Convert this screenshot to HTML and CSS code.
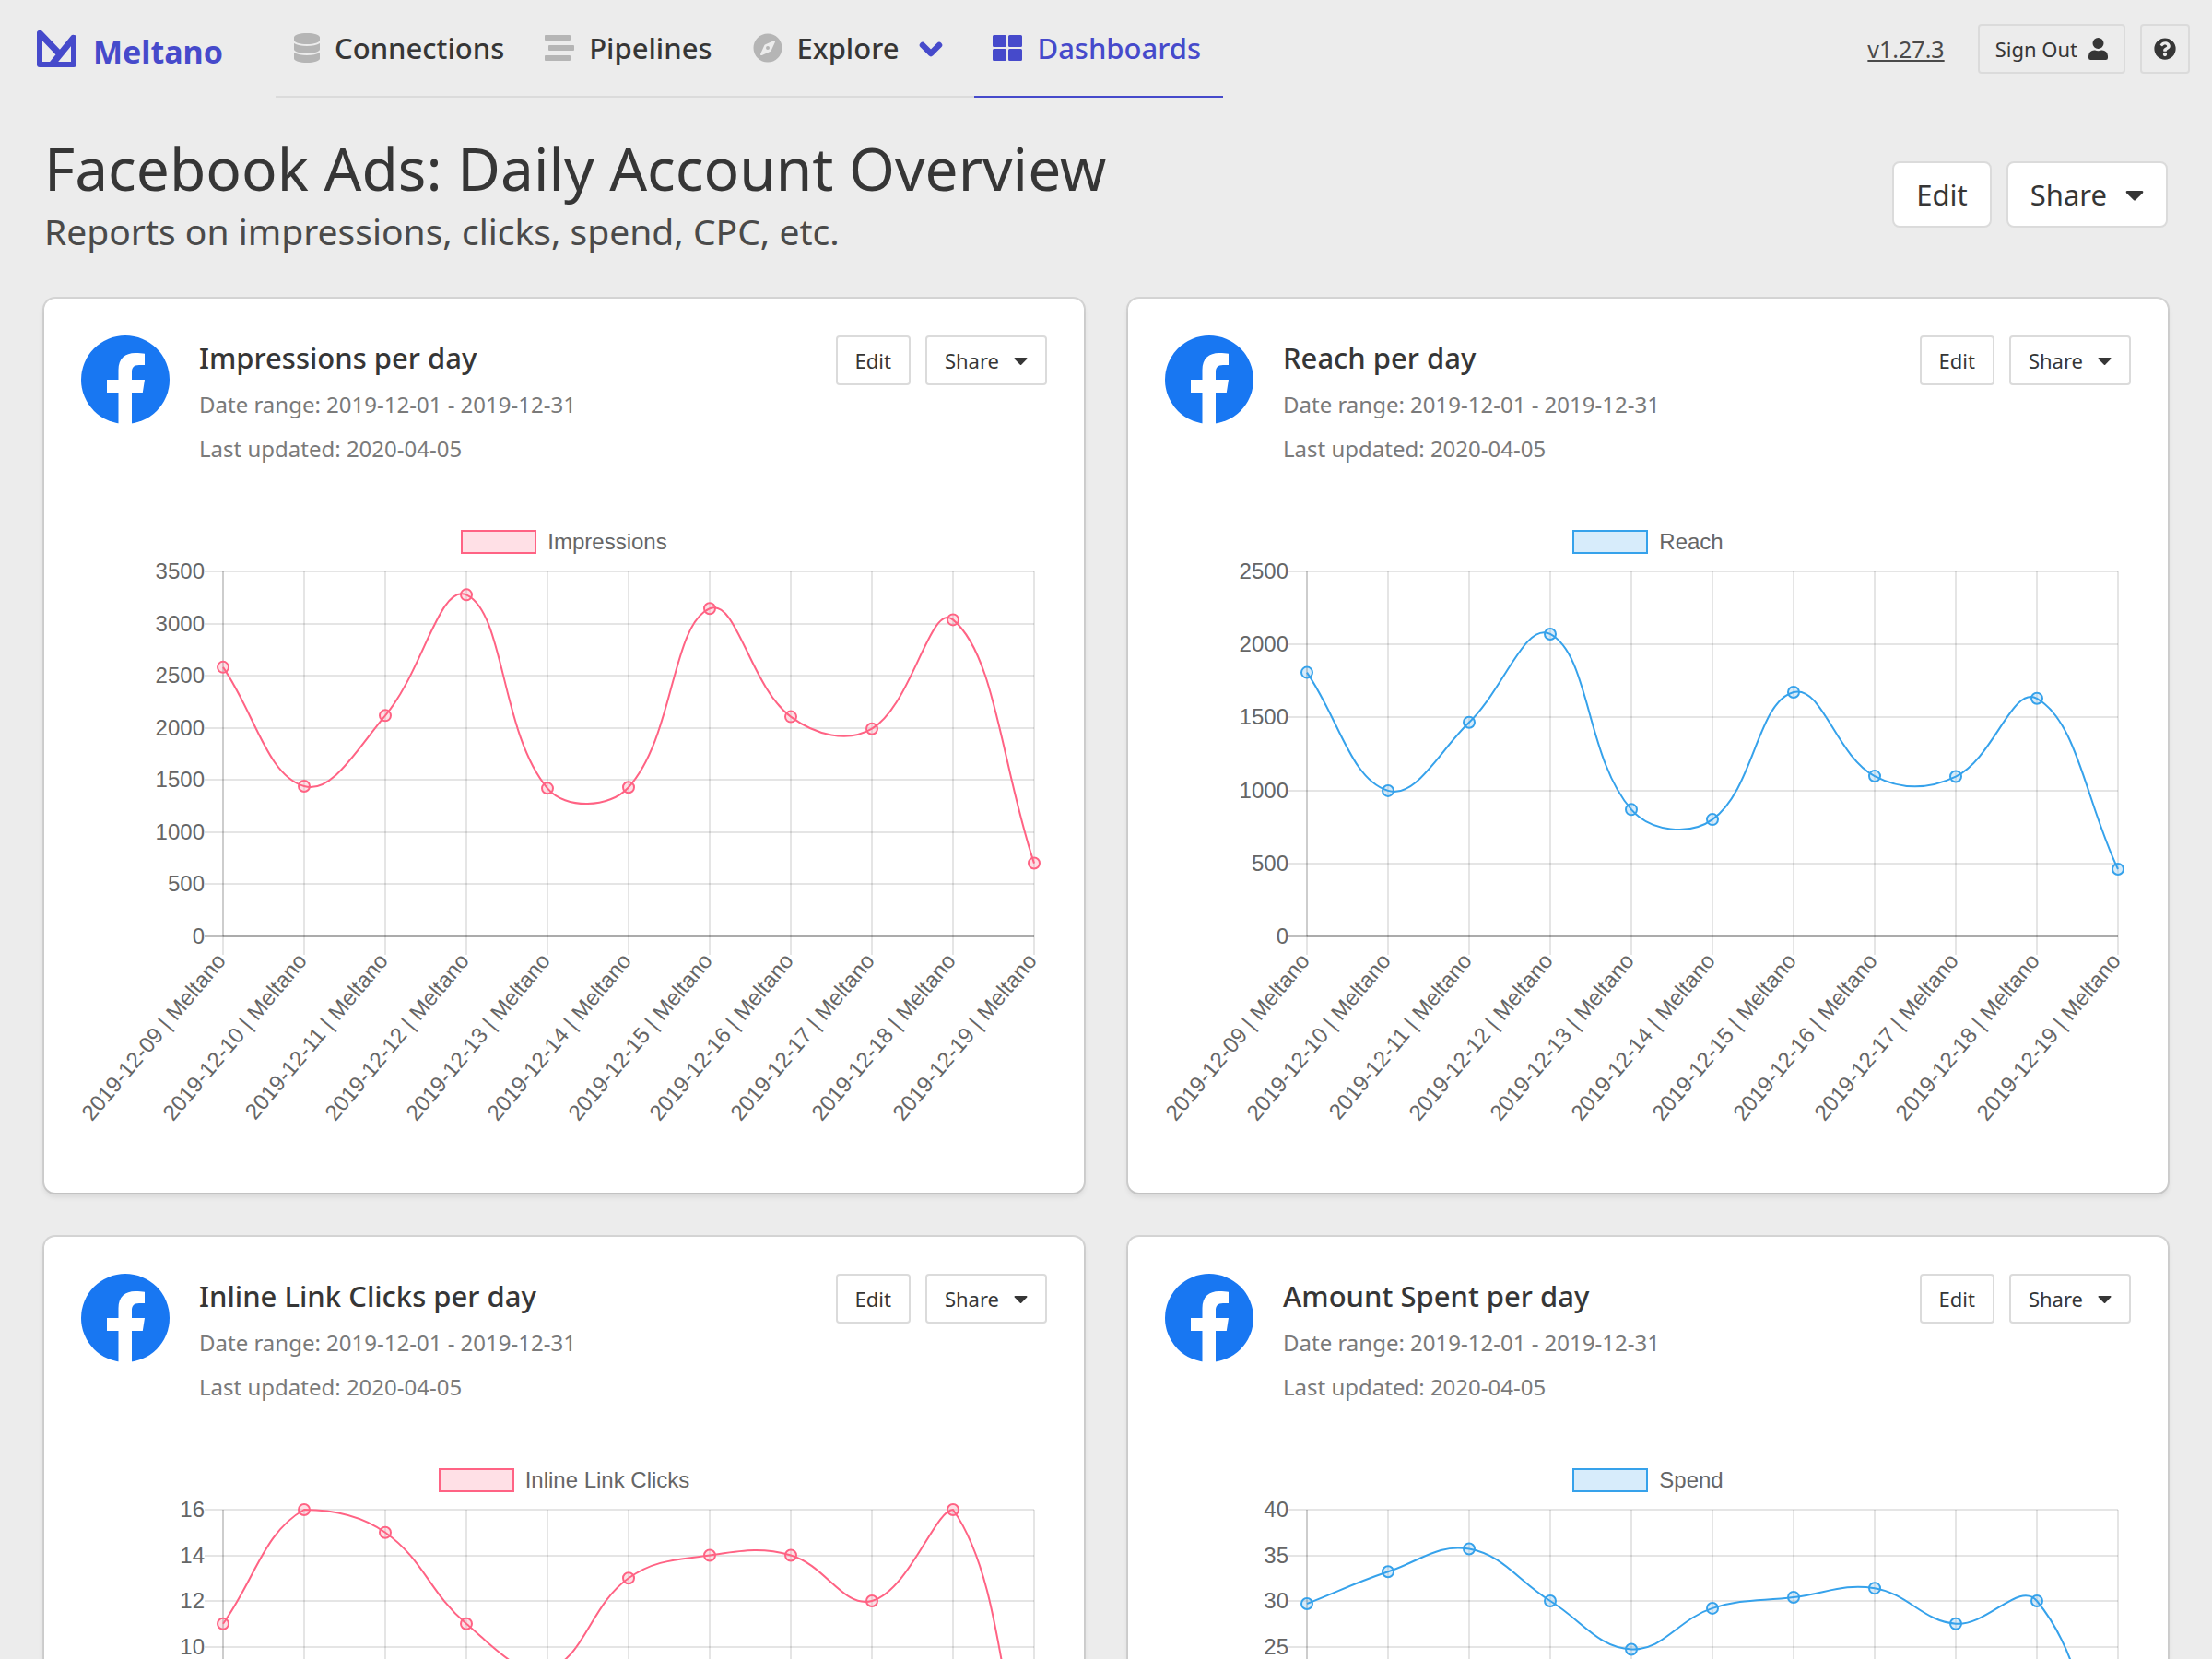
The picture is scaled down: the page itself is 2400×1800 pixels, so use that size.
FILE: index.html
```html
<!DOCTYPE html>
<html lang="en">
<head>
<meta charset="utf-8">
<meta name="viewport" content="width=device-width, initial-scale=1">
<title>Meltano</title>
<link rel="stylesheet" href="styles.css">
</head>
<body>

<svg class="sprite" aria-hidden="true">
  <symbol id="i-database" viewBox="0 0 448 512"><path d="M448 73v46c0 40-100 73-224 73S0 159 0 119V73C0 33 100 0 224 0s224 33 224 73zm0 103v103c0 40-100 73-224 73S0 319 0 279V176c48 33 136 49 224 49s176-16 224-49zm0 160v103c0 40-100 73-224 73S0 479 0 439V336c48 33 136 49 224 49s176-16 224-49z"/></symbol>
  <symbol id="i-stream" viewBox="0 0 512 512"><path d="M16 128h416a16 16 0 0 0 16-16V48a16 16 0 0 0-16-16H16A16 16 0 0 0 0 48v64a16 16 0 0 0 16 16zm480 80H80a16 16 0 0 0-16 16v64a16 16 0 0 0 16 16h416a16 16 0 0 0 16-16v-64a16 16 0 0 0-16-16zm-64 176H16a16 16 0 0 0-16 16v64a16 16 0 0 0 16 16h416a16 16 0 0 0 16-16v-64a16 16 0 0 0-16-16z"/></symbol>
  <symbol id="i-compass" viewBox="0 0 512 512"><path fill-rule="evenodd" d="M256 8a248 248 0 1 0 0 496 248 248 0 0 0 0-496zm126 148-69 150a16 16 0 0 1-8 8l-150 69c-16 7-33-9-25-25l69-150a16 16 0 0 1 8-8l150-69c16-7 32 9 25 25zm-126 68a32 32 0 1 0 0 64 32 32 0 0 0 0-64z"/></symbol>
  <symbol id="i-chevron" viewBox="0 0 26 17"><path d="M4 4l9 9 9-9" fill="none" stroke="currentColor" stroke-width="6.500" stroke-linecap="round" stroke-linejoin="round"/></symbol>
  <symbol id="i-grid" viewBox="0 0 512 512"><path d="M24 32h192a24 24 0 0 1 24 24v160a24 24 0 0 1-24 24H24a24 24 0 0 1-24-24V56a24 24 0 0 1 24-24zm272 0h192a24 24 0 0 1 24 24v160a24 24 0 0 1-24 24H296a24 24 0 0 1-24-24V56a24 24 0 0 1 24-24zM24 272h192a24 24 0 0 1 24 24v160a24 24 0 0 1-24 24H24a24 24 0 0 1-24-24V296a24 24 0 0 1 24-24zm272 0h192a24 24 0 0 1 24 24v160a24 24 0 0 1-24 24H296a24 24 0 0 1-24-24V296a24 24 0 0 1 24-24z"/></symbol>
  <symbol id="i-user" viewBox="0 0 448 512"><path d="M224 256a128 128 0 1 0 0-256 128 128 0 0 0 0 256zm90 32h-17a174 174 0 0 1-146 0h-17A134 134 0 0 0 0 422v42a48 48 0 0 0 48 48h352a48 48 0 0 0 48-48v-42a134 134 0 0 0-134-134z"/></symbol>
  <symbol id="i-help" viewBox="0 0 512 512"><path fill-rule="evenodd" d="M504 256a248 248 0 1 1-496 0 248 248 0 0 1 496 0zM262.700 90c-54.500 0-89.300 23-116.500 63.800a12 12 0 0 0 2.700 16l34.700 26.400a12 12 0 0 0 16.600-2.100c17.900-22.700 30.100-35.800 57.300-35.800 20.400 0 45.700 13.100 45.700 33 0 15-12.400 22.700-32.500 34C247.100 238.500 216 254.900 216 296v4a12 12 0 0 0 12 12h56a12 12 0 0 0 12-12v-1.300c0-28.500 83.200-29.600 83.200-106.700 0-58-60.200-102-116.500-102zM256 338a46 46 0 1 0 0 92 46 46 0 0 0 0-92z"/></symbol>
  <symbol id="i-caret" viewBox="0 0 320 512"><path d="M31 192h258c18 0 27 21 14 34L174 355a20 20 0 0 1-28 0L17 226c-13-13-4-34 14-34z"/></symbol>
  <symbol id="i-facebook" viewBox="0 0 96 96"><circle cx="48" cy="48" r="48" fill="#1877f2"/><path fill="#fff" d="M40.500 96V62H28V48h12.500V37.200C40.500 25 47.800 19 58.700 19c4 0 8 .4 10.300.8V32h-6c-6.300 0-8 3.500-8 8v8h14l-2.200 14H55v34z"/></symbol>
</svg>

<header class="navbar">
  <a class="brand" href="#">
    <svg class="brand-mark" viewBox="0 0 43 40" aria-hidden="true"><path d="M3 3v34h37V8"/><path class="fold" d="M3.500 3.500L25 26M39.500 8.500L17 36"/></svg>
    <span class="brand-name">Meltano</span>
  </a>
  <nav class="tabs">
    <a class="tab" href="#"><svg class="icon icon-narrow"><use href="#i-database"/></svg>Connections</a>
    <a class="tab" href="#"><svg class="icon"><use href="#i-stream"/></svg>Pipelines</a>
    <a class="tab" href="#"><svg class="icon"><use href="#i-compass"/></svg>Explore<svg class="chevron"><use href="#i-chevron"/></svg></a>
    <a class="tab is-active" href="#"><svg class="icon"><use href="#i-grid"/></svg>Dashboards</a>
  </nav>
  <div class="account">
    <a class="version" href="#">v1.27.3</a>
    <button class="button is-plain" type="button">Sign Out<svg class="glyph glyph-user" aria-hidden="true"><use href="#i-user"/></svg></button>
    <button class="button is-plain is-square" type="button" aria-label="Help"><svg class="glyph" aria-hidden="true"><use href="#i-help"/></svg></button>
  </div>
</header>

<main class="page">
  <div class="page-head">
    <div>
      <h1 class="title">Facebook Ads: Daily Account Overview</h1>
      <p class="subtitle">Reports on impressions, clicks, spend, CPC, etc.</p>
    </div>
    <div class="buttons">
      <button class="button is-large" type="button">Edit</button>
      <button class="button is-large" type="button">Share<svg class="caret" aria-hidden="true"><use href="#i-caret"/></svg></button>
    </div>
  </div>
  <div class="reports" id="reports"></div>
</main>

<template id="report-template">
  <article class="card">
    <header class="card-head">
      <svg class="avatar" role="img" aria-label="Facebook"><use href="#i-facebook"/></svg>
      <div class="card-text">
        <h2 class="card-title"></h2>
        <p class="meta">Date range: 2019-12-01 - 2019-12-31</p>
        <p class="meta">Last updated: 2020-04-05</p>
      </div>
      <div class="buttons">
        <button class="button" type="button">Edit</button>
        <button class="button" type="button">Share<svg class="caret" aria-hidden="true"><use href="#i-caret"/></svg></button>
      </div>
    </header>
    <figure class="chart">
      <figcaption class="legend"><span class="swatch"></span><span class="legend-label"></span></figcaption>
    </figure>
  </article>
</template>

<script src="charts.js"></script>
</body>
</html>
```

FILE: styles.css
```css
* { box-sizing: border-box; }

body {
  margin: 0;
  background: #ececec;
  color: #363636;
  font-family: "Noto Sans", "Open Sans", sans-serif;
  font-size: 24px;
}

h1, h2, p, figure { margin: 0; font-weight: 400; }
a { color: inherit; text-decoration: none; }
svg { fill: currentColor; flex: none; }
.sprite { display: none; }

.navbar {
  display: flex;
  align-items: stretch;
  height: 106px;
  padding: 0 24px 0 40px;
}

.brand {
  display: flex;
  align-items: center;
  gap: 18px;
  width: 259px;
  color: #464acb;
  font-size: 34px;
  font-weight: 700;
}
.brand-name { padding-top: 6px; }
.brand-mark {
  width: 43px;
  height: 40px;
  fill: none;
  stroke: currentColor;
  stroke-width: 6;
  stroke-linejoin: round;
  stroke-linecap: round;
}
.fold { stroke-width: 7; }

.tabs { display: flex; font-size: 31px; font-weight: 500; }
.tab {
  display: flex;
  align-items: center;
  gap: 16px;
  padding: 0 24px 0 20px;
  border-bottom: 2px solid #dbdbdb;
}
.icon { width: 32px; height: 32px; color: #b5b5b5; }
.icon-narrow { width: 28px; }
.chevron { width: 26px; height: 17px; margin: 3px 10px 0 6px; color: #464acb; }
.tab.is-active, .tab.is-active .icon { color: #464acb; border-color: #464acb; }

.account {
  display: flex;
  align-items: center;
  gap: 16px;
  margin-left: auto;
}
.version { margin-right: 20px; color: #4a4a4a; font-size: 25px; text-decoration: underline; }

.button {
  display: inline-flex;
  align-items: center;
  justify-content: center;
  gap: 16px;
  height: 54px;
  padding: 0 19px;
  border: 2px solid #dbdbdb;
  border-radius: 4px;
  background: #fff;
  color: #363636;
  font: inherit;
  font-size: 22px;
}
.button.is-plain { background: transparent; gap: 12px; padding: 0 17px; }
.button.is-square { width: 54px; padding: 0; }
.button.is-large { height: 72px; padding: 0 24px; border-radius: 8px; font-size: 31px; gap: 20px; }
.glyph { width: 24px; height: 24px; }
.glyph-user { width: 21px; }
.caret { width: 15px; height: 24px; }
.is-large .caret { width: 20px; height: 32px; }
.buttons { display: flex; gap: 16px; margin-left: auto; }

.page { padding: 41px 48px 48px; }
.page-head { display: flex; align-items: flex-start; margin-bottom: 43px; }
.page-head .buttons { padding-top: 28px; }
.title { font-size: 64px; line-height: 72px; }
.subtitle { padding-top: 2px; color: #4a4a4a; font-size: 39px; line-height: 60px; }

.reports {
  display: grid;
  grid-template-columns: 1fr 1fr;
  gap: 48px;
}
.card {
  padding: 40px;
  border-radius: 12px;
  background: #fff;
  box-shadow: 0 4px 6px rgba(10, 10, 10, .1), 0 0 0 2px rgba(10, 10, 10, .1);
}
.card-head { display: flex; align-items: flex-start; margin-bottom: 63px; }
.avatar { width: 96px; height: 96px; margin-right: 32px; }
.card-title { font-size: 31px; line-height: 48px; font-weight: 500; padding-bottom: 3px; }
.meta { color: #7a7a7a; line-height: 48px; }

.legend {
  display: flex;
  align-items: center;
  justify-content: center;
  gap: 12px;
  height: 28px;
  color: #666;
  font-family: "Liberation Sans", Arial, sans-serif;
}
.swatch { width: 82px; height: 26px; border: 2px solid; }
.series-pink .swatch { border-color: #ff6384; background: #ffe0e6; }
.series-blue .swatch { border-color: #36a2eb; background: #d7ecfb; }

.plot { display: block; width: 100%; height: auto; overflow: visible; }
.plot text { fill: #666; font-family: "Liberation Sans", Arial, sans-serif; font-size: 24px; text-anchor: end; }
.plot line { stroke: #000; stroke-opacity: .1; stroke-width: 2; }
.plot .zero { stroke-opacity: .25; }
.plot .curve { fill: none; stroke-width: 2; }
.plot circle { stroke-width: 2; fill-opacity: .2; }
.series-pink .curve, .series-pink circle { stroke: #ff6384; }
.series-blue .curve, .series-blue circle { stroke: #36a2eb; }
.series-pink circle { fill: #ff6384; }
.series-blue circle { fill: #36a2eb; }
```

FILE: charts.js
```js
const reports = [
  { title: 'Impressions per day', label: 'Impressions', color: 'pink', max: 3500, step: 500,
    values: [2582, 1440, 2118, 3276, 1420, 1430, 3144, 2107, 1991, 3037, 702] },
  { title: 'Reach per day', label: 'Reach', color: 'blue', max: 2500, step: 500,
    values: [1808, 998, 1466, 2071, 869, 801, 1673, 1098, 1095, 1630, 461] },
  { title: 'Inline Link Clicks per day', label: 'Inline Link Clicks', color: 'pink', max: 16, step: 2,
    values: [11, 16, 15, 11, 9, 13, 14, 14, 12, 16, 2] },
  { title: 'Amount Spent per day', label: 'Spend', color: 'blue', max: 40, step: 5,
    values: [29.7, 33.2, 35.7, 30, 24.7, 29.2, 30.4, 31.4, 27.5, 30, 6] },
];

const area = { left: 154, right: 1034, top: 18, bottom: 414 };
const size = { width: 1048, height: 652 };
const tick = 20;
const tension = 0.4;

// Smooth curve whose control points stay inside the plot area.
function curvePath(points) {
  const clampY = (y) => Math.min(Math.max(y, area.top), area.bottom);
  const controls = points.map((p, i) => {
    const prev = points[i - 1] || p;
    const next = points[i + 1] || p;
    const before = Math.hypot(p.x - prev.x, p.y - prev.y);
    const after = Math.hypot(next.x - p.x, next.y - p.y);
    const a = tension * before / (before + after);
    const b = tension * after / (before + after);
    return {
      inX: p.x - a * (next.x - prev.x), inY: clampY(p.y - a * (next.y - prev.y)),
      outX: p.x + b * (next.x - prev.x), outY: clampY(p.y + b * (next.y - prev.y)),
    };
  });
  return points.map((p, i) => i === 0
    ? `M${p.x} ${p.y}`
    : `C${controls[i - 1].outX} ${controls[i - 1].outY} ${controls[i].inX} ${controls[i].inY} ${p.x} ${p.y}`
  ).join('');
}

function plot(report) {
  const { left, right, top, bottom } = area;
  const points = report.values.map((v, i) => ({
    x: left + (right - left) * i / (report.values.length - 1),
    y: bottom - (bottom - top) * v / report.max,
  }));
  let out = '';
  for (let v = 0; v <= report.max; v += report.step) {
    const y = Math.round(bottom - (bottom - top) * v / report.max);
    out += `<line x1="${left - tick}" y1="${y}" x2="${right}" y2="${y}"${v === 0 ? ' class="zero"' : ''}/>`;
    out += `<text x="${left - tick}" y="${y + 8}">${v}</text>`;
  }
  points.forEach((p, i) => {
    const day = String(9 + i).padStart(2, '0');
    out += `<line x1="${p.x}" y1="${top}" x2="${p.x}" y2="${bottom + tick}"/>`;
    out += `<text transform="translate(${p.x - 2} ${bottom + tick + 2}) rotate(-50)" y="8">2019-12-${day} | Meltano</text>`;
  });
  out += `<line x1="${left}" y1="${top}" x2="${left}" y2="${bottom}"/>`;
  out += `<line x1="${left}" y1="${bottom}" x2="${right}" y2="${bottom}"/>`;
  out += `<path class="curve" d="${curvePath(points)}"/>`;
  out += points.map((p) => `<circle cx="${p.x}" cy="${p.y}" r="6"/>`).join('');
  return `<svg class="plot" viewBox="0 0 ${size.width} ${size.height}" role="img" aria-label="${report.title}">${out}</svg>`;
}

const template = document.getElementById('report-template');
const list = document.getElementById('reports');
reports.forEach((report) => {
  const card = template.content.cloneNode(true);
  card.querySelector('.card-title').textContent = report.title;
  card.querySelector('.legend-label').textContent = report.label;
  const chart = card.querySelector('.chart');
  chart.classList.add(`series-${report.color}`);
  chart.insertAdjacentHTML('beforeend', plot(report));
  list.appendChild(card);
});
```
